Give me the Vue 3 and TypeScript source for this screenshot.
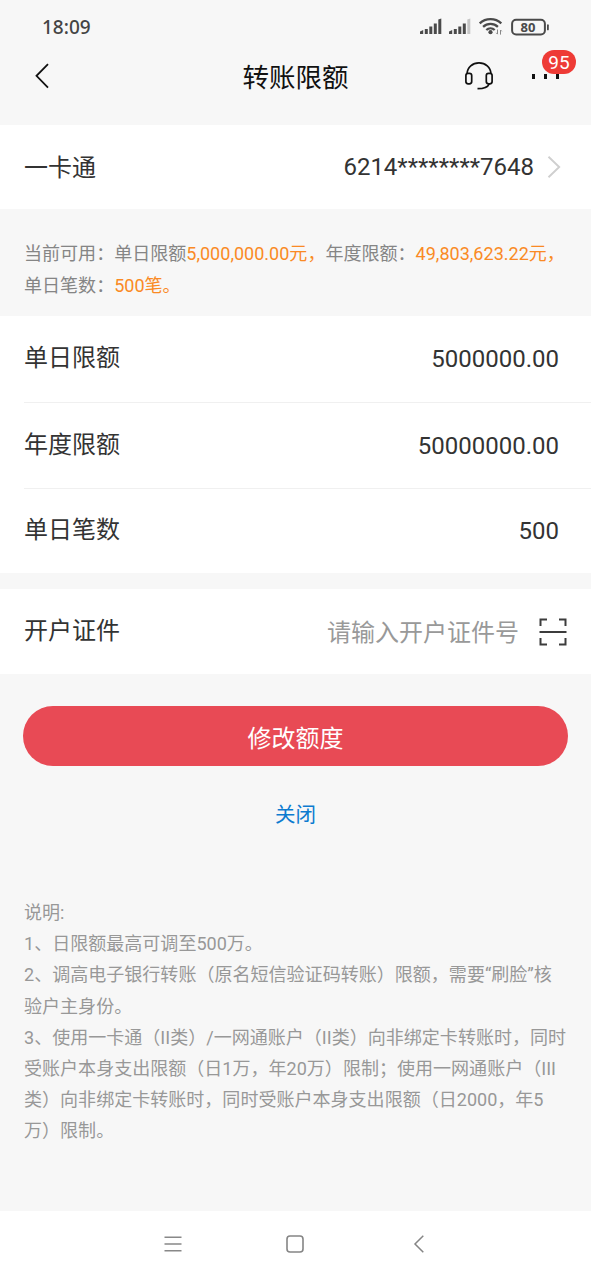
<script setup lang="ts">
interface LimitRow {
  label: string
  value: string
}

interface Segment {
  text: string
  accent?: boolean
}

const limits: LimitRow[] = [
  { label: '单日限额', value: '5000000.00' },
  { label: '年度限额', value: '50000000.00' },
  { label: '单日笔数', value: '500' },
]

const available: Segment[][] = [
  [
    { text: '当前可用：单日限额' },
    { text: '5,000,000.00元，', accent: true },
    { text: '年度限额：' },
    { text: '49,803,623.22元，', accent: true },
  ],
  [{ text: '单日笔数：' }, { text: '500笔。', accent: true }],
]

const notes: string[] = [
  '说明:',
  '1、日限额最高可调至500万。',
  '2、调高电子银行转账（原名短信验证码转账）限额，需要“刷脸”核',
  '验户主身份。',
  '3、使用一卡通（II类）/一网通账户（II类）向非绑定卡转账时，同时',
  '受账户本身支出限额（日1万，年20万）限制；使用一网通账户（III',
  '类）向非绑定卡转账时，同时受账户本身支出限额（日2000，年5',
  '万）限制。',
]
</script>

<template>
  <div class="screen">
    <header class="top">
      <div class="status">
        <span class="clock">18:09</span>
        <svg class="status-icons" width="132" height="22" viewBox="0 0 132 22">
          <g fill="#4a4a4a">
            <path d="M1 15.5l3.2-1.4V18H1zM5.8 13h3v5h-3zM10.3 10.4h3V18h-3zM14.8 7.400h3V18h-3zM19.3 3.600l3-1V18h-3z" />
            <path d="M30 15.500l3.200-1.400V18H30zM34.800 13h3v5h-3zM39.300 10.400h3V18h-3zM43.800 7.400h3V18h-3z" />
            <path d="M48.300 3.600l3-1V18h-3z" fill="#c6c6c6" />
            <circle cx="71.500" cy="16.200" r="2.100" />
            <path d="M78.500 13.500V18m-1.300-1.200l1.300 1.400M81.500 18.600v-4.500m1.300 1.200L81.500 14" fill="none" stroke="#888" stroke-width="1" />
            <rect x="128" y="8.300" width="1.800" height="6" rx=".9" />
          </g>
          <g fill="none" stroke="#4a4a4a" stroke-width="2.300">
            <path d="M60.700 7.400a16 16 0 0 1 21.600 0M64.100 10.800a11 11 0 0 1 14.800 0M67.300 14a6.200 6.200 0 0 1 8.400 0" />
            <rect x="93.100" y="3.700" width="32.800" height="14.800" rx="4" stroke-width="2" />
          </g>
          <text x="109" y="15.800" text-anchor="middle" class="battery-text">80</text>
        </svg>
      </div>
      <div class="navbar">
        <svg class="back" width="16" height="26" viewBox="0 0 16 26">
          <path d="M14 1.200L2.500 12.800 14 24.600" fill="none" stroke="#111" stroke-width="1.800" />
        </svg>
        <h1 class="title">转账限额</h1>
        <div class="actions">
          <svg width="30" height="30" viewBox="0 0 30 30" fill="none" stroke="#111" stroke-width="1.700">
            <path d="M3 12.800C3.400 6 8.600 1.900 15 1.900S26.600 6 27 12.800" />
            <rect x="1.900" y="12.300" width="5.800" height="10.600" rx="2.300" />
            <rect x="22.300" y="12.300" width="5.800" height="10.600" rx="2.300" />
            <path d="M25.200 23c-1.400 3.500-5.200 4.700-11.700 4.700" />
          </svg>
          <div class="more">
            <i class="dot"></i><i class="dot"></i><i class="dot"></i>
            <span class="badge">95</span>
          </div>
        </div>
      </div>
    </header>

    <section class="row account">
      <span class="label">一卡通</span>
      <span class="value">6214********7648</span>
      <svg class="chevron" width="14" height="24" viewBox="0 0 14 24">
        <path d="M1.500 1.800L12.200 12 1.500 22.200" fill="none" stroke="#cfcfcf" stroke-width="1.900" />
      </svg>
    </section>

    <section class="available">
      <div v-for="(line, i) in available" :key="i" class="available-line">
        <span v-for="seg in line" :key="seg.text" :class="{ accent: seg.accent }">{{ seg.text }}</span>
      </div>
    </section>

    <section class="limits">
      <div v-for="row in limits" :key="row.label" class="row limit">
        <span class="label">{{ row.label }}</span>
        <span class="value">{{ row.value }}</span>
      </div>
    </section>

    <section class="row document">
      <span class="label">开户证件</span>
      <span class="placeholder">请输入开户证件号</span>
      <svg class="scan" width="28" height="28" viewBox="0 0 28 28" fill="none" stroke="#3c3c3c" stroke-width="2">
        <path d="M1.500 8V1.500H8M20 1.500h6.500V8M26.500 20v6.500H20M8 26.500H1.500V20M.5 14h27" />
      </svg>
    </section>

    <button class="submit" type="button">修改额度</button>
    <a class="close">关闭</a>

    <section class="notes">
      <div v-for="note in notes" :key="note">{{ note }}</div>
    </section>

    <nav class="system">
      <svg width="18" height="18" viewBox="0 0 18 18" fill="none" stroke="#888" stroke-width="1.500">
        <path d="M.5 2.300h17M.5 9h17M.5 15.700h17" />
      </svg>
      <svg width="18" height="18" viewBox="0 0 18 18" fill="none" stroke="#858585" stroke-width="1.600">
        <rect x="1" y="1" width="16" height="16" rx="3" />
      </svg>
      <svg width="18" height="18" viewBox="0 0 18 18" fill="none" stroke="#858585" stroke-width="1.500">
        <path d="M15.300.8L7 9l8.300 8.300" />
      </svg>
    </nav>
  </div>
</template>

<style>
body {
  margin: 0;
  background: #f7f7f7;
}
</style>

<style scoped>
.screen {
  display: flex;
  flex-direction: column;
  width: 591px;
  height: 1280px;
  overflow: hidden;
  background: #f7f7f7;
  color: #333;
  font-family: Roboto, "Noto Sans CJK SC", sans-serif;
  font-size: 24px;
  white-space: nowrap;
}

.top {
  height: 125px;
}

.status {
  display: flex;
  justify-content: space-between;
  align-items: center;
  height: 52px;
  padding: 1px 40px 0 42px;
  box-sizing: border-box;
}

.clock {
  font-family: "Noto Sans", sans-serif;
  font-size: 19px;
  font-weight: 500;
  color: #444;
}

.battery-text {
  font: 700 13px "Open Sans", sans-serif;
  fill: #4a4a4a;
}

.navbar {
  display: grid;
  grid-template-columns: 1fr auto 1fr;
  align-items: center;
  height: 48px;
  padding: 0 32px 0 34px;
}

.title {
  margin: 4px 2px 0 0;
  font-size: 26.5px;
  font-weight: 400;
  line-height: 40px;
  color: #111;
}

.actions {
  display: flex;
  justify-content: flex-end;
  align-items: center;
  gap: 38px;
}

.more {
  position: relative;
  display: flex;
  justify-content: space-between;
  width: 27px;
}

.dot {
  width: 3px;
  height: 5px;
  background: #111;
}

.badge {
  position: absolute;
  left: 10px;
  top: -24px;
  width: 34px;
  height: 24px;
  border-radius: 12px;
  background: #ee3b36;
  color: #fff;
  font-size: 19px;
  line-height: 25px;
  text-align: center;
}

.row {
  display: flex;
  align-items: center;
  box-sizing: border-box;
  background: #fff;
  padding-left: 24px;
}

.label {
  flex: 1;
  line-height: 36px;
}

.account {
  height: 84px;
  padding-right: 30px;
}

.account .label {
  padding-top: 1px;
}

.chevron {
  margin-left: 13px;
}

.available {
  height: 107px;
  box-sizing: border-box;
  padding: 29px 0 0 24px;
  font-size: 18.05px;
  line-height: 32px;
  color: #858585;
}

.available-line {
  height: 32px;
}

.accent {
  color: #fa8a24;
}

.limits {
  background: #fff;
}

.limit {
  height: 86px;
  margin-left: 24px;
  padding: 0 32px 0 0;
  border-bottom: 1px solid #f0f0f0;
}

.limit:first-child {
  height: 87px;
}

.limit .label {
  padding-bottom: 2px;
}

.limit:last-child {
  height: 84px;
  border-bottom: 0;
}

.document {
  height: 85px;
  margin-top: 16px;
  padding-right: 24px;
}

.document .label {
  padding-bottom: 1px;
}

.placeholder {
  padding-bottom: 2px;
  color: #999;
}

.scan {
  margin-left: 20px;
}

.submit {
  height: 60px;
  margin: 32px 23px 0;
  padding: 0;
  border: 0;
  border-radius: 30px;
  background: #e84a55;
  color: #fff;
  font: inherit;
}

.close {
  margin-top: 34px;
  font-size: 20.5px;
  line-height: 30px;
  text-align: center;
  color: #0d7bd0;
}

.notes {
  flex: 1;
  padding: 67px 0 0 24px;
  font-size: 18.05px;
  line-height: 31.2px;
  color: #989898;
}

.system {
  display: flex;
  justify-content: center;
  align-items: center;
  gap: 104px;
  height: 69px;
  box-sizing: border-box;
  padding: 0 1px 3px 0;
  background: #fff;
}
</style>
